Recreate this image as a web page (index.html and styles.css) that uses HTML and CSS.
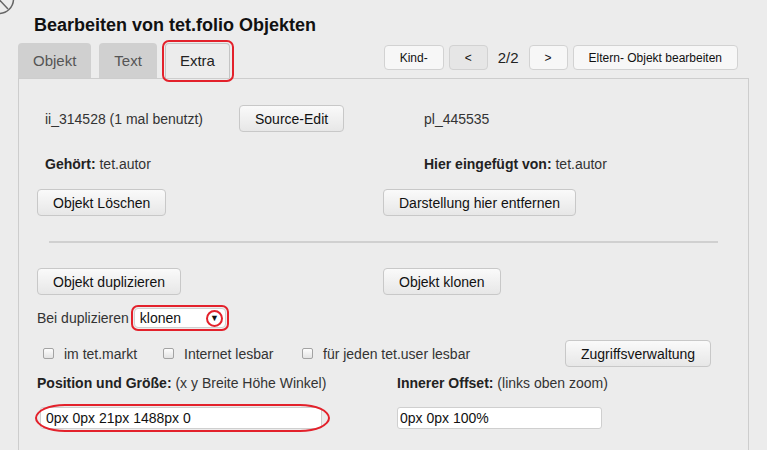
FILE: index.html
```html
<!DOCTYPE html>
<html lang="de">
<head>
    <meta charset="UTF-8">
    <title>Bearbeiten von tet.folio Objekten</title>
    <link rel="stylesheet" href="styles.css">
</head>
<body>
    <svg class="close-icon" width="32" height="32" viewBox="0 0 32 32">
        <circle cx="15" cy="15" r="14.5" fill="none" stroke="#666" stroke-width="1.5"/>
        <line x1="8" y1="8" x2="24" y2="25" stroke="#666" stroke-width="1.5"/>
    </svg>

    <h1 class="dialog-title">Bearbeiten von tet.folio Objekten</h1>

    <div class="tabbar">
        <div class="tabs">
            <div class="tab">Objekt</div>
            <div class="tab">Text</div>
            <div class="tab active marked">Extra</div>
        </div>
        <div class="nav">
            <button class="nav-btn">Kind-</button>
            <button class="nav-btn pressed">&lt;</button>
            <span class="pager">2/2</span>
            <button class="nav-btn">&gt;</button>
            <button class="nav-btn">Eltern- Objekt bearbeiten</button>
        </div>
    </div>

    <div class="panel">
        <div class="row row-ident">
            <div class="cell">
                <span class="ident">ii_314528 (1 mal benutzt)</span>
                <button class="btn">Source-Edit</button>
            </div>
            <div class="cell"><span class="ident-right">pl_445535</span></div>
        </div>

        <div class="row row-owner">
            <div class="cell"><span class="ident"><b>Gehört:</b> tet.autor</span></div>
            <div class="cell"><span class="ident-right"><b>Hier eingefügt von:</b> tet.autor</span></div>
        </div>

        <div class="row row-btns">
            <div class="cell"><button class="btn">Objekt Löschen</button></div>
            <div class="cell"><button class="btn">Darstellung hier entfernen</button></div>
        </div>

        <hr class="divider">

        <div class="row row-btns row-dup">
            <div class="cell"><button class="btn">Objekt duplizieren</button></div>
            <div class="cell"><button class="btn">Objekt klonen</button></div>
        </div>

        <div class="row-select">
            <span>Bei duplizieren</span>
            <span class="marked-box">
                <span class="select">
                    <span>klonen</span>
                    <span class="select-arrow">▼</span>
                </span>
            </span>
        </div>

        <div class="row-checks">
            <label class="check check-1"><input type="checkbox"> im tet.markt</label>
            <label class="check check-2"><input type="checkbox"> Internet lesbar</label>
            <label class="check check-3"><input type="checkbox"> für jeden tet.user lesbar</label>
            <button class="btn">Zugriffsverwaltung</button>
        </div>

        <div class="row row-labels">
            <div class="cell"><b>Position und Größe:</b>&nbsp;(x y Breite Höhe Winkel)</div>
            <div class="cell offset"><b>Innerer Offset:</b>&nbsp;(links oben zoom)</div>
        </div>

        <div class="row row-inputs">
            <div class="cell">
                <span class="marked-ellipse">
                    <input class="field field-pos" type="text" value="0px 0px 21px 1488px 0">
                </span>
            </div>
            <div class="cell offset">
                <input class="field field-offset" type="text" value="0px 0px 100%">
            </div>
        </div>
    </div>
</body>
</html>
```

FILE: styles.css
```css
* {
    box-sizing: border-box;
}

body {
    margin: 0;
    padding-top: 14px;
    height: 450px;
    overflow: hidden;
    position: relative;
    background: #ececec;
    color: #333;
    font-family: "Liberation Sans", Arial, sans-serif;
    font-size: 14px;
}

.close-icon {
    position: absolute;
    left: -16px;
    top: -16px;
}

.dialog-title {
    margin: 0;
    padding-left: 34px;
    font-size: 18px;
    line-height: 22px;
    font-weight: bold;
    color: #111;
}

/* tabs + navigation */

.tabbar {
    display: flex;
    justify-content: space-between;
    width: 731px;
    height: 35px;
    margin: 7px 0 0 18px;
}

.tabs {
    display: flex;
    gap: 8px;
}

.tab {
    height: 35px;
    line-height: 35px;
    padding: 0 15px;
    background: #d0d0d0;
    border-radius: 4px 4px 0 0;
    color: #555;
    font-size: 15px;
}

.tab.active {
    padding: 0 14px;
    background: #ececec;
    border: 1px solid #c4c4c4;
    border-bottom: none;
    line-height: 34px;
    color: #222;
}

.marked {
    position: relative;
}

.marked::after {
    content: "";
    position: absolute;
    left: -4px;
    right: -5px;
    top: -4px;
    bottom: -4px;
    border: 2px solid #e3212b;
    border-radius: 7px;
}

.nav {
    display: flex;
    align-items: center;
    height: 25px;
    margin-top: 2px;
    padding-right: 11px;
}

.nav-btn {
    height: 25px;
    padding: 0 15px;
    margin: 0 0 0 5px;
    background: #f7f7f7;
    border: 1px solid #d2d2d2;
    border-radius: 4px;
    font-family: inherit;
    font-size: 12px;
    color: #111;
}

.nav-btn:first-child {
    margin-left: 0;
}

.nav-btn.pressed {
    background: #e6e6e6;
}

.pager {
    margin: 0 5px 0 10px;
    font-size: 15px;
    color: #222;
}

/* main panel */

.panel {
    width: 731px;
    height: 372px;
    margin-left: 18px;
    padding: 0 0 0 18px;
    border: 1px solid #cdcdcd;
    border-bottom: none;
}

.row {
    display: grid;
    grid-template-columns: 346px auto;
    align-items: center;
}

.cell {
    display: flex;
    align-items: center;
}

.btn {
    height: 27px;
    padding: 0 15px;
    background: linear-gradient(#fafafa, #e7e7e7);
    border: 1px solid #c8c8c8;
    border-radius: 4px;
    font-family: inherit;
    font-size: 14px;
    color: #111;
}

.ident {
    width: 202px;
    padding-left: 8px;
}

.ident-right {
    padding-left: 41px;
}

b {
    color: #222;
}

.row-ident {
    height: 27px;
    margin-top: 26px;
}

.row-owner {
    height: 20px;
    margin-top: 22px;
}

.row-btns {
    height: 27px;
    margin-top: 15px;
}

.divider {
    height: 2px;
    margin: 25px 30px 0 12px;
    border: none;
    background: #d0d0d0;
}

.row-dup {
    margin-top: 25px;
}

/* select */

.row-select {
    display: flex;
    align-items: center;
    gap: 2px;
    height: 26px;
    margin-top: 10px;
}

.marked-box {
    padding: 1px;
    border: 2px solid #e3212b;
    border-radius: 7px;
}

.select {
    display: flex;
    align-items: center;
    justify-content: space-between;
    width: 92px;
    height: 20px;
    padding: 0 2px 0 5px;
    background: #fff;
    border: 1px solid #d0d0d0;
    border-radius: 4px;
    color: #111;
}

.select-arrow {
    display: flex;
    align-items: center;
    justify-content: center;
    width: 17px;
    height: 17px;
    border: 2px solid #e3212b;
    border-radius: 50%;
    font-size: 9px;
    color: #111;
}

/* checkboxes */

.row-checks {
    display: flex;
    align-items: center;
    height: 27px;
    margin-top: 9px;
    padding-left: 6px;
}

.check {
    display: flex;
    align-items: center;
    gap: 10px;
}

.check-1 { width: 120px; }
.check-2 { width: 139px; }
.check-3 { width: 263px; }

.check input {
    appearance: none;
    width: 11px;
    height: 11px;
    margin: 0;
    background: linear-gradient(#fdfdfd, #e3e3e3);
    border: 1px solid #a3a3a3;
    border-radius: 2px;
}

/* position fields */

.row-labels {
    height: 18px;
    margin-top: 7px;
}

.offset {
    padding-left: 14px;
}

.row-inputs {
    height: 28px;
    margin-top: 12px;
}

.marked-ellipse {
    position: relative;
    display: flex;
    margin-left: 3px;
}

.marked-ellipse::after {
    content: "";
    position: absolute;
    left: -5px;
    right: -8px;
    top: -3px;
    bottom: -3px;
    border: 2px solid #e3212b;
    border-radius: 30px / 14px;
}

.field {
    height: 22px;
    padding: 0 2px;
    background: #fff;
    border: 1px solid #cfcfcf;
    border-radius: 3px;
    font-family: inherit;
    font-size: 14px;
    color: #111;
}

.field-pos {
    width: 282px;
    padding-left: 5px;
}

.field-offset {
    width: 205px;
}
```
